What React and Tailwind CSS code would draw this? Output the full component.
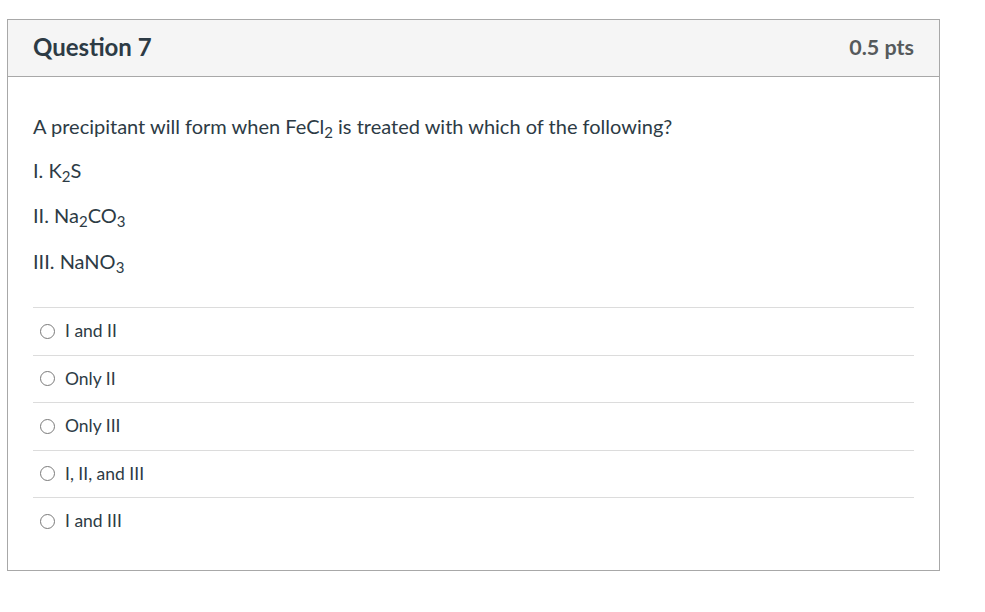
export default function App() {
  const options = ['I and II', 'Only II', 'Only III', 'I, II, and III', 'I and III']

  return (
    <div className="min-h-screen bg-white pt-[19px] pl-[7px]" style={{ fontFamily: 'Lato, "Open Sans", sans-serif' }}>
      <div className="w-[933px] border border-[#a8a8a8] text-[#2d3b45]">
        {/* header */}
        <div className="h-[57px] bg-[#f5f5f5] border-b border-[#a8a8a8] px-[25px] pb-[2px] flex items-center justify-between">
          <h2 className="text-[24px] font-bold text-[#2d3b45]">Question 7</h2>
          <div className="text-[21.5px] font-bold text-[#565a5c]">0.5 pts</div>
        </div>

        {/* body */}
        <div className="px-[25px] pt-[35px] pb-[25px]">
          <div className="text-[20px] leading-[28px]">
            <p className="mb-[16px]">A precipitant will form when FeCl<sub className="text-[15px]">2</sub> is treated with which of the following?</p>
            <p className="mb-[17px]">I. K<sub className="text-[15px]">2</sub>S</p>
            <p className="mb-[18px]">II. Na<sub className="text-[15px]">2</sub>CO<sub className="text-[15px]">3</sub></p>
            <p>III. NaNO<sub className="text-[15px]">3</sub></p>
          </div>

          <div className="mt-[32px]">
            {options.map(o => (
              <div key={o} className="h-[47.5px] border-t border-[#dcdcdc] flex items-center pl-[7px] gap-[10px]">
                <span className="w-[15px] h-[15px] rounded-full border border-[#7a7a7a] bg-white shrink-0" />
                <span className="text-[17.5px]">{o}</span>
              </div>
            ))}
          </div>
        </div>
      </div>
    </div>
  )
}
